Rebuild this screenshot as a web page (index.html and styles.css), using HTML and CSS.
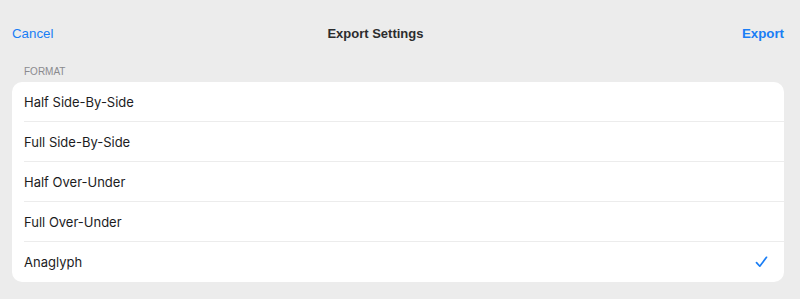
FILE: index.html
```html
<!DOCTYPE html>
<html lang="en">
<head>
    <meta charset="UTF-8">
    <meta name="viewport" content="width=device-width, initial-scale=1.0">
    <title>Export Settings</title>
    <link rel="stylesheet" href="styles.css">
</head>
<body>
    <div class="sheet">
        <div class="nav-bar">
            <button class="nav-btn">Cancel</button>
            <div class="nav-title">Export Settings</div>
            <button class="nav-btn nav-btn-bold">Export</button>
        </div>

        <div class="section-label">FORMAT</div>
        <ul class="list">
            <li class="list-row">Half Side-By-Side</li>
            <li class="list-row">Full Side-By-Side</li>
            <li class="list-row">Half Over-Under</li>
            <li class="list-row">Full Over-Under</li>
            <li class="list-row selected">
                Anaglyph
                <svg class="check" width="13" height="12" viewBox="0 0 13 12">
                    <path d="M1.5 6.6 L4.8 10.2 L11.5 1.3" fill="none" stroke="#1a7ef5" stroke-width="1.7" stroke-linecap="round" stroke-linejoin="round"/>
                </svg>
            </li>
        </ul>
    </div>
</html>
```
FILE: styles.css
```css
body {
    font-family: "Liberation Sans", Arial, sans-serif;
    background-color: #ececec;
    margin: 0;
    padding: 0;
}

.sheet {
    padding: 0 16px 0 12px;
}

.nav-bar {
    display: flex;
    align-items: center;
    height: 66px;
}

.nav-btn {
    background: none;
    border: none;
    padding: 0;
    font-family: inherit;
    font-size: 13.3px;
    color: #1a7ef5;
    cursor: pointer;
}

.nav-btn-bold {
    font-weight: bold;
    margin-left: auto;
}

.nav-title {
    font-size: 13px;
    font-weight: bold;
    color: #2c2c2e;
    margin-left: 274px;
}

.section-label {
    font-size: 10px;
    color: #8a8a8e;
    padding-left: 12px;
    height: 16px;
}

.list {
    list-style: none;
    margin: 0;
    padding: 0;
    background-color: #fff;
    border-radius: 10px;
}

.list-row {
    display: flex;
    align-items: center;
    justify-content: space-between;
    height: 40px;
    margin-left: 12px;
    padding-right: 16px;
    font-family: Inter, "Liberation Sans", sans-serif;
    font-size: 13px;
    color: #1c1c1e;
    border-bottom: 1px solid #ececec;
    box-sizing: border-box;
}

.list-row:last-child {
    border-bottom: none;
}
```
